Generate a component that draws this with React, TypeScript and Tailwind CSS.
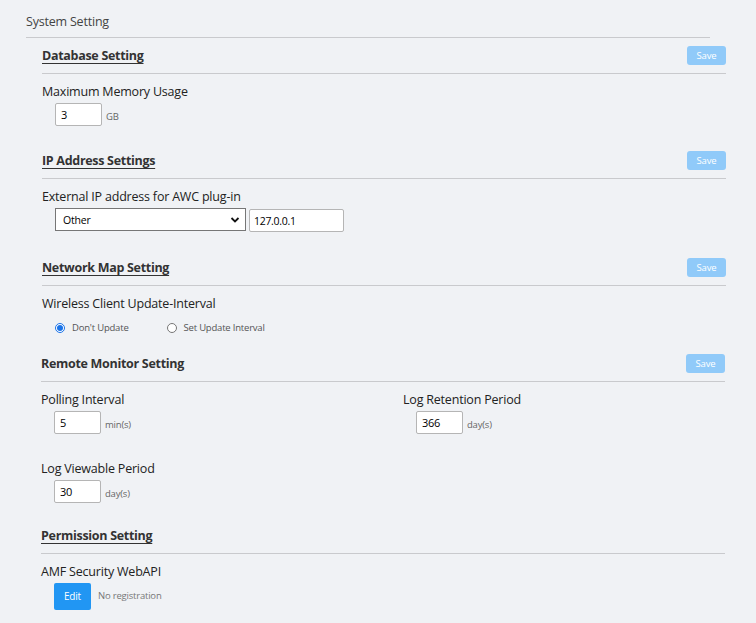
import React from 'react'

const font = { fontFamily: '"Open Sans", "Noto Sans", sans-serif' }

function SaveButton() {
  return (
    <button className="ml-auto h-[19px] w-[39px] rounded-[3px] bg-[#90caf9] text-[9.5px] leading-none tracking-[-0.2px] text-white">
      Save
    </button>
  )
}

function SectionHeader({ title, underline = true, save = false }: { title: string; underline?: boolean; save?: boolean }) {
  return (
    <div className="flex h-[36px] items-center border-b border-[#c9cacd]">
      <span
        className={`pt-[2px] text-[12.5px] font-bold tracking-[-0.3px] text-[#333] ${
          underline ? 'underline decoration-[1px] underline-offset-[3px]' : ''
        }`}
      >
        {title}
      </span>
      {save && <SaveButton />}
    </div>
  )
}

function Label({ children }: { children: React.ReactNode }) {
  return <div className="h-5 text-[12.5px] leading-[22px] tracking-[-0.2px] text-[#222]">{children}</div>
}

function Unit({ children }: { children: React.ReactNode }) {
  return <span className="pt-[5px] text-[9.5px] tracking-[-0.2px] text-[#666]">{children}</span>
}

function NumberField({ value, unit }: { value: string; unit: string }) {
  return (
    <div className="mt-[2px] flex items-center gap-1 pl-[13px]">
      <input
        readOnly
        value={value}
        className="h-[23px] w-[47px] rounded-[2px] border border-[#b5b5b5] bg-white px-[5px] text-[11px] tracking-[-0.3px] text-black outline-none"
      />
      <Unit>{unit}</Unit>
    </div>
  )
}

function Radio({ checked, label }: { checked?: boolean; label: string }) {
  return (
    <label className="flex items-center gap-[7px]">
      <span
        className={`flex h-[10px] w-[10px] items-center justify-center rounded-full border ${
          checked ? 'border-[#1a73e8] bg-white' : 'border-[#767676] bg-white'
        }`}
      >
        {checked && <span className="h-[6px] w-[6px] rounded-full bg-[#1a73e8]" />}
      </span>
      <span className="pt-px text-[9.5px] tracking-[-0.2px] text-[#555]">{label}</span>
    </label>
  )
}

export default function App() {
  return (
    <div className="min-h-screen bg-[#f0f2f5] pl-[26px] pt-[11px]" style={font}>
      <div className="w-[684px]">
        <div className="border-b border-[#c9cacd] pb-[4px] text-[12.5px] leading-[22px] tracking-[-0.2px] text-[#444]">
          System Setting
        </div>
      </div>

      <div className="ml-4 w-[684px]">
        {/* Database */}
        <SectionHeader title="Database Setting" save />
        <div className="mt-[7px]">
          <Label>Maximum Memory Usage</Label>
          <NumberField value="3" unit="GB" />
        </div>

        {/* IP address */}
        <div className="mt-[17px]">
          <SectionHeader title="IP Address Settings" save />
        </div>
        <div className="mt-[7px]">
          <Label>External IP address for AWC plug-in</Label>
          <div className="mt-[2px] flex items-start gap-[3px] pl-[13px]">
            <div className="relative h-[23px] w-[191px] border border-[#767676] bg-white">
              <span className="absolute left-[7px] top-[4px] text-[10.5px] leading-[14px] tracking-[-0.2px] text-black">
                Other
              </span>
              <svg className="absolute right-[5px] top-[7px]" width="10" height="8" viewBox="0 0 10 8">
                <path d="M1.5 2 L5 5.5 L8.5 2" fill="none" stroke="#111" strokeWidth="1.8" />
              </svg>
            </div>
            <input
              readOnly
              value="127.0.0.1"
              className="mt-px h-[23px] w-[95px] rounded-[2px] border border-[#b5b5b5] bg-white px-[4px] text-[10.5px] tracking-[-0.3px] text-black outline-none"
            />
          </div>
        </div>

        {/* Network map */}
        <div className="mt-[18px]">
          <SectionHeader title="Network Map Setting" save />
        </div>
        <div className="mt-[7px]">
          <Label>Wireless Client Update-Interval</Label>
          <div className="mt-[7px] flex h-4 items-center gap-[38px] pl-[13px]">
            <Radio checked label="Don't Update" />
            <Radio label="Set Update Interval" />
          </div>
        </div>

        {/* Remote monitor */}
        <div className="-ml-px mt-[10px] w-[684px]">
          <SectionHeader title="Remote Monitor Setting" underline={false} save />
          <div className="mt-[7px] grid grid-cols-[362px_1fr]">
            <div>
              <Label>Polling Interval</Label>
              <NumberField value="5" unit="min(s)" />
            </div>
            <div>
              <Label>Log Retention Period</Label>
              <NumberField value="366" unit="day(s)" />
            </div>
          </div>
          <div className="mt-[24px]">
            <Label>Log Viewable Period</Label>
            <NumberField value="30" unit="day(s)" />
          </div>

          {/* Permission */}
          <div className="mt-[15px]">
            <SectionHeader title="Permission Setting" />
          </div>
          <div className="mt-[7px]">
            <Label>AMF Security WebAPI</Label>
            <div className="mt-[2px] flex items-center gap-[7px] pl-[13px]">
              <button className="h-[27px] w-[37px] rounded-[2px] bg-[#2196f3] text-[10px] tracking-[-0.2px] text-white">
                Edit
              </button>
              <span className="text-[9.5px] tracking-[-0.2px] text-[#777]">No registration</span>
            </div>
          </div>
        </div>
      </div>
    </div>
  )
}
